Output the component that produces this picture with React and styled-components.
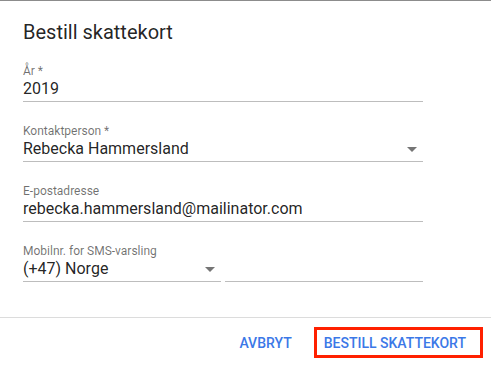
import React from 'react';
import styled, { createGlobalStyle } from 'styled-components';

const GlobalStyle = createGlobalStyle`
  html, body {
    margin: 0;
    padding: 0;
    background: #fff;
  }
  body {
    font-family: Roboto, 'Liberation Sans', Arial, sans-serif;
    -webkit-font-smoothing: antialiased;
  }
`;

function Arrow() {
  return (
    <ArrowIcon viewBox='0 0 10 5' aria-hidden='true'>
      <path d='M0 0 L10 0 L5 5 Z' fill='#757575' />
    </ArrowIcon>
  );
}

function Field({ label, value, select, width }) {
  return (
    <FieldBox width={width}>
      {label && <Label>{label}</Label>}
      <Value>
        <span>{value}</span>
        {select && <Arrow />}
      </Value>
    </FieldBox>
  );
}

export default function App() {
  return (
    <>
      <GlobalStyle />
      <Dialog>
        <Title>Bestill skattekort</Title>
        <Form>
          <Field label='År *' value='2019' />
          <Field label='Kontaktperson *' value='Rebecka Hammersland' select />
          <Field
            label='E-postadresse'
            value='rebecka.hammersland@mailinator.com'
          />
          <PhoneRow>
            <Field
              label='Mobilnr. for SMS-varsling'
              value='(+47) Norge'
              select
              width='198px'
            />
            <Field label={'\u00a0'} value='' width='198px' />
          </PhoneRow>
        </Form>
        <Footer>
          <Button>Avbryt</Button>
          <Button highlighted>Bestill skattekort</Button>
        </Footer>
      </Dialog>
    </>
  );
}

const Dialog = styled.div`
  width: 491px;
  height: 370px;
  box-sizing: border-box;
  border-top: 1px solid #8c8c8c;
  display: flex;
  flex-direction: column;
  overflow: hidden;
`;

const Title = styled.h2`
  margin: 19px 0 0;
  padding: 0 23px;
  font-size: 20px;
  line-height: 24px;
  font-weight: 400;
  color: rgba(0, 0, 0, 0.87);
`;

const Form = styled.div`
  display: flex;
  flex-direction: column;
  gap: 21px;
  padding: 19px 68px 0 23px;
`;

const FieldBox = styled.div`
  width: ${({ width }) => width || '400px'};
  display: flex;
  flex-direction: column;
  border-bottom: 1px solid #bdbdbd;
  padding-bottom: 2px;
`;

const Label = styled.label`
  font-size: 12px;
  line-height: 16px;
  color: rgba(0, 0, 0, 0.56);
`;

const Value = styled.div`
  display: flex;
  align-items: center;
  justify-content: space-between;
  height: 20px;
  font-size: 16px;
  line-height: 20px;
  color: rgba(0, 0, 0, 0.87);
  white-space: nowrap;
`;

const ArrowIcon = styled.svg`
  width: 10px;
  height: 5px;
  margin-right: 6px;
  flex-shrink: 0;
`;

const PhoneRow = styled.div`
  display: flex;
  gap: 4px;
  width: 400px;
`;

const Footer = styled.div`
  margin-top: 35px;
  border-top: 1px solid #dcdcdc;
  display: flex;
  justify-content: flex-end;
  align-items: center;
  gap: 14px;
  padding: 9px 8px 0 0;
`;

const Button = styled.button`
  background: none;
  font-family: inherit;
  font-size: 14px;
  font-weight: 500;
  text-transform: uppercase;
  letter-spacing: 0;
  color: #3b78e7;
  height: 31px;
  box-sizing: border-box;
  padding: ${({ highlighted }) => (highlighted ? '0 14px 0 7px' : '0 8px')};
  border: ${({ highlighted }) => (highlighted ? '3px solid #ff2000' : 'none')};
  cursor: pointer;
`;
